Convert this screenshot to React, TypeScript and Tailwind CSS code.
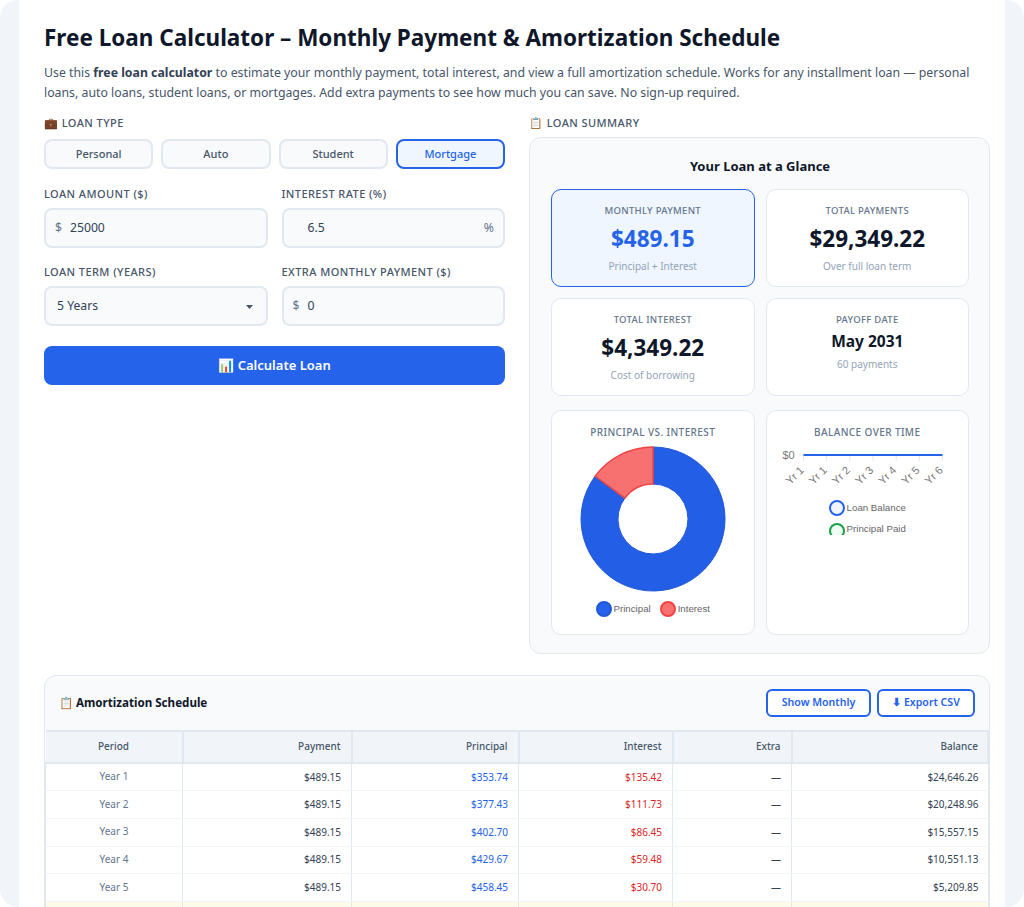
const years = [
  { period: 'Year 1', principal: '$353.74', interest: '$135.42', balance: '$24,646.26' },
  { period: 'Year 2', principal: '$377.43', interest: '$111.73', balance: '$20,248.96' },
  { period: 'Year 3', principal: '$402.70', interest: '$86.45', balance: '$15,557.15' },
  { period: 'Year 4', principal: '$429.67', interest: '$59.48', balance: '$10,551.13' },
  { period: 'Year 5', principal: '$458.45', interest: '$30.70', balance: '$5,209.85' },
];

const fieldLabel = 'block text-[11px] leading-[18px] font-medium tracking-[0.43px] uppercase text-[#475569]';
const fieldBox = 'h-[40px] pt-[1px] rounded-[8px] border-2 border-[#e2e8f0] bg-[#f8fafc] flex items-center text-[12.2px] text-[#334155]';

function LoanTab({ label, active }: { label: string; active?: boolean }) {
  return (
    <button
      className={
        active
          ? 'h-[30px] pt-[1px] rounded-[8px] border-2 border-[#2563eb] bg-[#eff6ff] text-[11px] font-medium text-[#2563eb]'
          : 'h-[30px] pt-[1px] rounded-[8px] border-2 border-[#e2e8f0] bg-[#f8fafc] text-[11px] font-medium text-[#475569]'
      }
    >
      {label}
    </button>
  );
}

function StatCard({ label, value, note, highlight, small }: { label: string; value: string; note: string; highlight?: boolean; small?: boolean }) {
  return (
    <div
      className={
        highlight
          ? 'h-[98px] rounded-[10px] border border-[#2563eb] bg-[#eff6ff] pt-[13px] text-center'
          : 'h-[98px] rounded-[10px] border border-[#e2e8f0] bg-white pt-[13px] text-center'
      }
    >
      <div className="text-[9.5px] leading-[15px] font-medium tracking-[0.3px] uppercase text-[#64748b]">{label}</div>
      {small ? (
        <div className="mt-[2px] text-[15.5px] leading-[24px] font-bold text-[#0f172a]">{value}</div>
      ) : (
        <div className={highlight ? 'mt-[4px] text-[22.5px] leading-[33px] font-bold text-[#2563eb]' : 'mt-[4px] text-[22.5px] leading-[33px] font-bold text-[#0f172a]'}>{value}</div>
      )}
      <div className="mt-[3px] text-[10px] leading-[16px] text-[#94a3b8]">{note}</div>
    </div>
  );
}

function LegendDot({ border, fill }: { border: string; fill: string }) {
  return <span className={`inline-block w-[16px] h-[16px] rounded-full border-2 ${border} ${fill}`} />;
}

function Donut() {
  return (
    <svg width="146" height="146" viewBox="0 0 146 146" className="block">
      <path d="M73 1 A72 72 0 1 1 15.2 30.1 L44.9 52.1 A35 35 0 1 0 73 38 Z" fill="#235ee6" stroke="#2258d8" strokeWidth="1" />
      <path d="M73 1 L73 38 A35 35 0 0 0 44.9 52.1 L15.2 30.1 A72 72 0 0 1 73 1 Z" fill="#f87171" stroke="#ef4444" strokeWidth="1.5" />
    </svg>
  );
}

function BalanceAxis() {
  const ticks = ['Yr 1', 'Yr 1', 'Yr 2', 'Yr 3', 'Yr 4', 'Yr 5', 'Yr 6'];
  return (
    <svg width="180" height="50" viewBox="0 0 180 50" className="block" fontFamily="'Liberation Sans', sans-serif">
      <text x="5.5" y="13" fontSize="11" fill="#777">$0</text>
      <line x1="22" y1="9" x2="26.5" y2="9" stroke="#e5e5e5" />
      {ticks.map((t, i) => {
        const x = 26.5 + i * 23.17;
        return (
          <g key={i}>
            <line x1={x} y1="9" x2={x} y2="15" stroke="#e5e5e5" />
            <text x={x + 1} y="25" fontSize="11" fill="#777" textAnchor="end" transform={`rotate(-45 ${x + 1} 25)`}>{t}</text>
          </g>
        );
      })}
      <line x1="26.5" y1="9" x2="165.5" y2="9" stroke="#2563eb" strokeWidth="2" />
    </svg>
  );
}

export default function App() {
  return (
    <div className="h-[907px] bg-white" style={{ fontFamily: "'Noto Sans', sans-serif" }}>
      <div className="h-full overflow-hidden rounded-[18px] bg-[#f1f5f9] px-[19px]">
        <div className="w-[986px] h-full bg-white pl-[25px] pr-[15px] pt-[23px]">
          <h1 className="text-[22.5px] leading-[30px] font-bold whitespace-nowrap text-[#0f172a]">Free Loan Calculator – Monthly Payment &amp; Amortization Schedule</h1>
          <p className="mt-[10px] text-[12.3px] leading-[20px] text-[#475569]">
            Use this <strong className="text-[#334155]">free loan calculator</strong> to estimate your monthly payment, total interest, and view a full amortization schedule. Works for any installment loan — personal loans, auto loans, student loans, or mortgages. Add extra payments to see how much you can save. No sign-up required.
          </p>

          <div className="mt-[11px] flex gap-[24px]">
            <div className="w-[461px]">
              <div className={fieldLabel}>💼 Loan Type</div>
              <div className="mt-[7px] grid grid-cols-4 gap-[8px]">
                <LoanTab label="Personal" />
                <LoanTab label="Auto" />
                <LoanTab label="Student" />
                <LoanTab label="Mortgage" active />
              </div>
              <div className="mt-[16px] grid grid-cols-2 gap-x-[14px] gap-y-[15px]">
                <div>
                  <label className={fieldLabel}>Loan Amount ($)</label>
                  <div className={`mt-[5px] px-[9px] ${fieldBox}`}><span className="text-[#64748b] mr-[8px]">$</span>25000</div>
                </div>
                <div>
                  <label className={fieldLabel}>Interest Rate (%)</label>
                  <div className={`mt-[5px] pl-[24px] pr-[9px] justify-between ${fieldBox}`}>6.5<span className="text-[#64748b]">%</span></div>
                </div>
                <div>
                  <label className={fieldLabel}>Loan Term (Years)</label>
                  <div className={`mt-[5px] pl-[11px] pr-[13px] justify-between ${fieldBox}`}>
                    5 Years
                    <svg width="7" height="4" viewBox="0 0 7 4"><path d="M0 0h7L3.5 4z" fill="#475569" /></svg>
                  </div>
                </div>
                <div>
                  <label className={fieldLabel}>Extra Monthly Payment ($)</label>
                  <div className={`mt-[5px] px-[9px] ${fieldBox}`}><span className="text-[#64748b] mr-[8px]">$</span>0</div>
                </div>
              </div>
              <button className="mt-[20px] w-full h-[39px] pt-[1px] rounded-[8px] bg-[#2563eb] text-[13px] font-semibold text-white">📊 Calculate Loan</button>
            </div>

            <div className="w-[461px]">
              <div className={fieldLabel}>📋 Loan Summary</div>
              <div className="mt-[5px] h-[517px] rounded-[12px] border border-[#e2e8f0] bg-[#f8fafc] pl-[21px] pr-[20px] pt-[18px]">
                <h2 className="text-center text-[13px] leading-[21px] font-bold text-[#0f172a]">Your Loan at a Glance</h2>
                <div className="mt-[12px] grid grid-cols-2 gap-[11px]">
                  <StatCard label="Monthly Payment" value="$489.15" note="Principal + Interest" highlight />
                  <StatCard label="Total Payments" value="$29,349.22" note="Over full loan term" />
                  <StatCard label="Total Interest" value="$4,349.22" note="Cost of borrowing" />
                  <StatCard label="Payoff Date" value="May 2031" note="60 payments" small />
                </div>
                <div className="mt-[14px] grid grid-cols-2 gap-[11px]">
                  <div className="h-[225px] rounded-[10px] border border-[#e2e8f0] bg-white pt-[13px] flex flex-col items-center">
                    <div className="text-[10px] leading-[16px] font-medium tracking-[0.4px] uppercase text-[#64748b]">Principal vs. Interest</div>
                    <div className="mt-[6px]"><Donut /></div>
                    <div className="mt-[9px] flex items-center gap-[9px] text-[9.7px] text-[#666]" style={{ fontFamily: "'Liberation Sans', sans-serif" }}>
                      <span className="flex items-center gap-[2px]"><LegendDot border="border-[#2258d8]" fill="bg-[#2563eb]" />Principal</span>
                      <span className="flex items-center gap-[2px]"><LegendDot border="border-[#ef4444]" fill="bg-[#f87171]" />Interest</span>
                    </div>
                  </div>
                  <div className="h-[225px] rounded-[10px] border border-[#e2e8f0] bg-white pt-[13px] flex flex-col items-center">
                    <div className="text-[10px] leading-[16px] font-medium tracking-[0.4px] uppercase text-[#64748b]">Balance Over Time</div>
                    <div className="mt-[6px]"><BalanceAxis /></div>
                    <div className="mt-[4px] flex flex-col items-start gap-[7px] text-[9.7px] text-[#666]" style={{ fontFamily: "'Liberation Sans', sans-serif" }}>
                      <span className="flex items-center gap-[2px]"><LegendDot border="border-[#2563eb]" fill="bg-[#eff6ff]" />Loan Balance</span>
                      <span className="flex items-center gap-[2px] h-[12px] overflow-hidden"><span className="self-start flex"><LegendDot border="border-[#16a34a]" fill="bg-[#f0fdf4]" /></span>Principal Paid</span>
                    </div>
                  </div>
                </div>
              </div>
            </div>
          </div>

          <div className="mt-[21px] rounded-t-[12px] border border-[#e2e8f0] bg-[#f8fafc]">
            <div className="h-[54px] flex items-center justify-between pl-[14px] pr-[14px]">
              <div className="text-[11.6px] font-bold text-[#0f172a]">📋 Amortization Schedule</div>
              <div className="flex gap-[6px]">
                <button className="w-[105px] h-[28px] rounded-[6px] border-2 border-[#2563eb] bg-white text-[10.6px] font-semibold text-[#2563eb]">Show Monthly</button>
                <button className="w-[98px] h-[28px] rounded-[6px] border-2 border-[#2563eb] bg-white text-[10.6px] font-semibold text-[#2563eb]">⬇ Export CSV</button>
              </div>
            </div>
            <table className="w-full border-collapse table-fixed text-[10px]">
              <colgroup>
                <col className="w-[137px]" />
                <col className="w-[169px]" />
                <col className="w-[167px]" />
                <col className="w-[154px]" />
                <col className="w-[119px]" />
                <col />
              </colgroup>
              <thead>
                <tr className="h-[32px] bg-[#f1f5f9] text-[#475569]">
                  <th className="border-2 border-l-0 border-[#e2e8f0] pb-[1px] font-medium text-center">Period</th>
                  {['Payment', 'Principal', 'Interest', 'Extra'].map((h) => (
                    <th key={h} className="border-2 border-[#e2e8f0] px-[10px] pb-[1px] font-medium text-right">{h}</th>
                  ))}
                  <th className="border-2 border-[#e2e8f0] pl-[10px] pr-[9px] pb-[1px] font-medium text-right">Balance</th>
                </tr>
              </thead>
              <tbody className="bg-white">
                {years.map((y) => (
                  <tr key={y.period} className="h-[27.7px]">
                    <td className="border border-[#f1f5f9] border-x-[#e2e8f0] pb-[1px] text-center text-[#64748b]">{y.period}</td>
                    <td className="border border-[#f1f5f9] border-x-[#e2e8f0] px-[10px] text-right text-[#334155]">$489.15</td>
                    <td className="border border-[#f1f5f9] border-x-[#e2e8f0] px-[10px] text-right text-[#2563eb]">{y.principal}</td>
                    <td className="border border-[#f1f5f9] border-x-[#e2e8f0] px-[10px] text-right text-[#dc2626]">{y.interest}</td>
                    <td className="border border-[#f1f5f9] border-x-[#e2e8f0] px-[10px] text-right text-[#334155]">—</td>
                    <td className="border border-[#f1f5f9] border-x-[#e2e8f0] pl-[10px] pr-[9px] text-right text-[#334155]">{y.balance}</td>
                  </tr>
                ))}
                <tr className="h-[28px] bg-[#fefce8]">
                  {[0, 1, 2, 3, 4, 5].map((i) => (
                    <td key={i} className="border border-[#f1f5f9] border-x-[#e2e8f0]" />
                  ))}
                </tr>
              </tbody>
            </table>
          </div>
        </div>
      </div>
    </div>
  );
}
